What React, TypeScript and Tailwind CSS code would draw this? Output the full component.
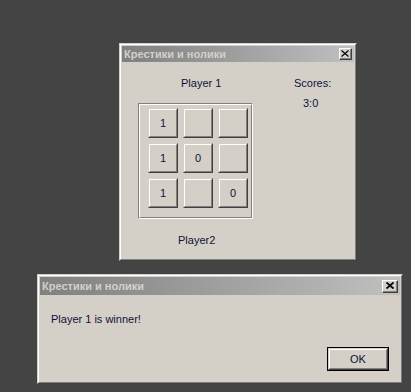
import React from "react";

const font = "font-['Liberation_Sans',Arial,sans-serif]";

// classic raised frame (window / button)
const Raised: React.FC<{ className?: string; children?: React.ReactNode }> = ({ className = "", children }) => (
  <div className={`border border-t-[#d4d0c8] border-l-[#d4d0c8] border-r-[#404040] border-b-[#404040] ${className}`}>
    <div className="h-full w-full border border-t-white border-l-white border-r-[#808080] border-b-[#808080] bg-[#d4d0c8]">
      {children}
    </div>
  </div>
);

const CloseBtn: React.FC<{ bold?: boolean; className?: string }> = ({ bold, className = "" }) => (
  <div className={`border border-t-white border-l-white border-r-[#404040] border-b-[#404040] bg-[#d4d0c8] ${className}`}>
    <div className="flex h-full w-full items-center justify-center border-r border-b border-r-[#808080] border-b-[#808080]">
      <svg width="8" height="7" viewBox="0 0 8 7">
        <path d="M0.5 0.5 L7.5 6.5 M7.5 0.5 L0.5 6.5" stroke="#000" strokeWidth={bold ? 1.8 : 1.1} fill="none" />
      </svg>
    </div>
  </div>
);

const TitleBar: React.FC<{ h: string; bold?: boolean; btn: string }> = ({ h, bold, btn }) => (
  <div className={`flex ${h} items-center justify-between bg-gradient-to-r from-[#808080] to-[#c0c0c0] pl-[2px] pr-[2px]`}>
    <span className="text-[11px] font-bold leading-[13px] text-[#d4d0c8]">Крестики и нолики</span>
    <CloseBtn bold={bold} className={btn} />
  </div>
);

const Cell: React.FC<{ v: string }> = ({ v }) => (
  <Raised className="h-[30px] w-[30px]">
    <div className="flex h-full items-center justify-center text-[11px] text-[#10103a]">{v}</div>
  </Raised>
);

export default function App() {
  const board = ["1", "", "", "1", "0", "", "1", "", "0"];
  return (
    <div className={`relative h-[392px] w-[411px] overflow-hidden bg-[#444444] ${font}`}>
      {/* game window */}
      <Raised className="absolute left-[119px] top-[43px] h-[218px] w-[238px]">
        <div className="p-[1px]">
          <TitleBar h="h-[16px]" btn="h-[12px] w-[13px]" />
          <div className="flex text-[11px] leading-[13px] text-[#10103a]">
            <div className="ml-[16px] mt-[15px] w-[115px]">
              <div className="pl-[43px]">Player 1</div>
              <div className="mt-[13px] h-[116px] border border-t-[#808080] border-l-[#808080] border-r-white border-b-white">
                <div className="h-full border border-t-white border-l-white border-r-[#808080] border-b-[#808080] pl-[8px] pt-[3px]">
                  <div className="grid w-[100px] grid-cols-3 gap-[5px]">
                    {board.map((v, i) => (
                      <Cell key={i} v={v} />
                    ))}
                  </div>
                </div>
              </div>
              <div className="mt-[15px] pl-[40px]">Player2</div>
            </div>
            <div className="ml-[41px] mt-[15px]">
              <div>Scores:</div>
              <div className="mt-[7px] pl-[9px]">3:0</div>
            </div>
          </div>
        </div>
      </Raised>

      {/* message box */}
      <Raised className="absolute left-[37px] top-[274px] h-[110px] w-[366px]">
        <div className="flex h-full flex-col p-[1px]">
          <TitleBar h="h-[18px]" bold btn="h-[13px] w-[16px]" />
          <div className="ml-[11px] mt-[18px] text-[11px] leading-[13px] text-[#10103a]">Player 1 is winner!</div>
          <div className="mt-auto mb-[10px] mr-[11px] flex justify-end">
            <div className="border border-black">
              <Raised className="h-[22px] w-[60px]">
                <div className="flex h-full items-center justify-center text-[11px] text-[#10103a]">OK</div>
              </Raised>
            </div>
          </div>
        </div>
      </Raised>
    </div>
  );
}
